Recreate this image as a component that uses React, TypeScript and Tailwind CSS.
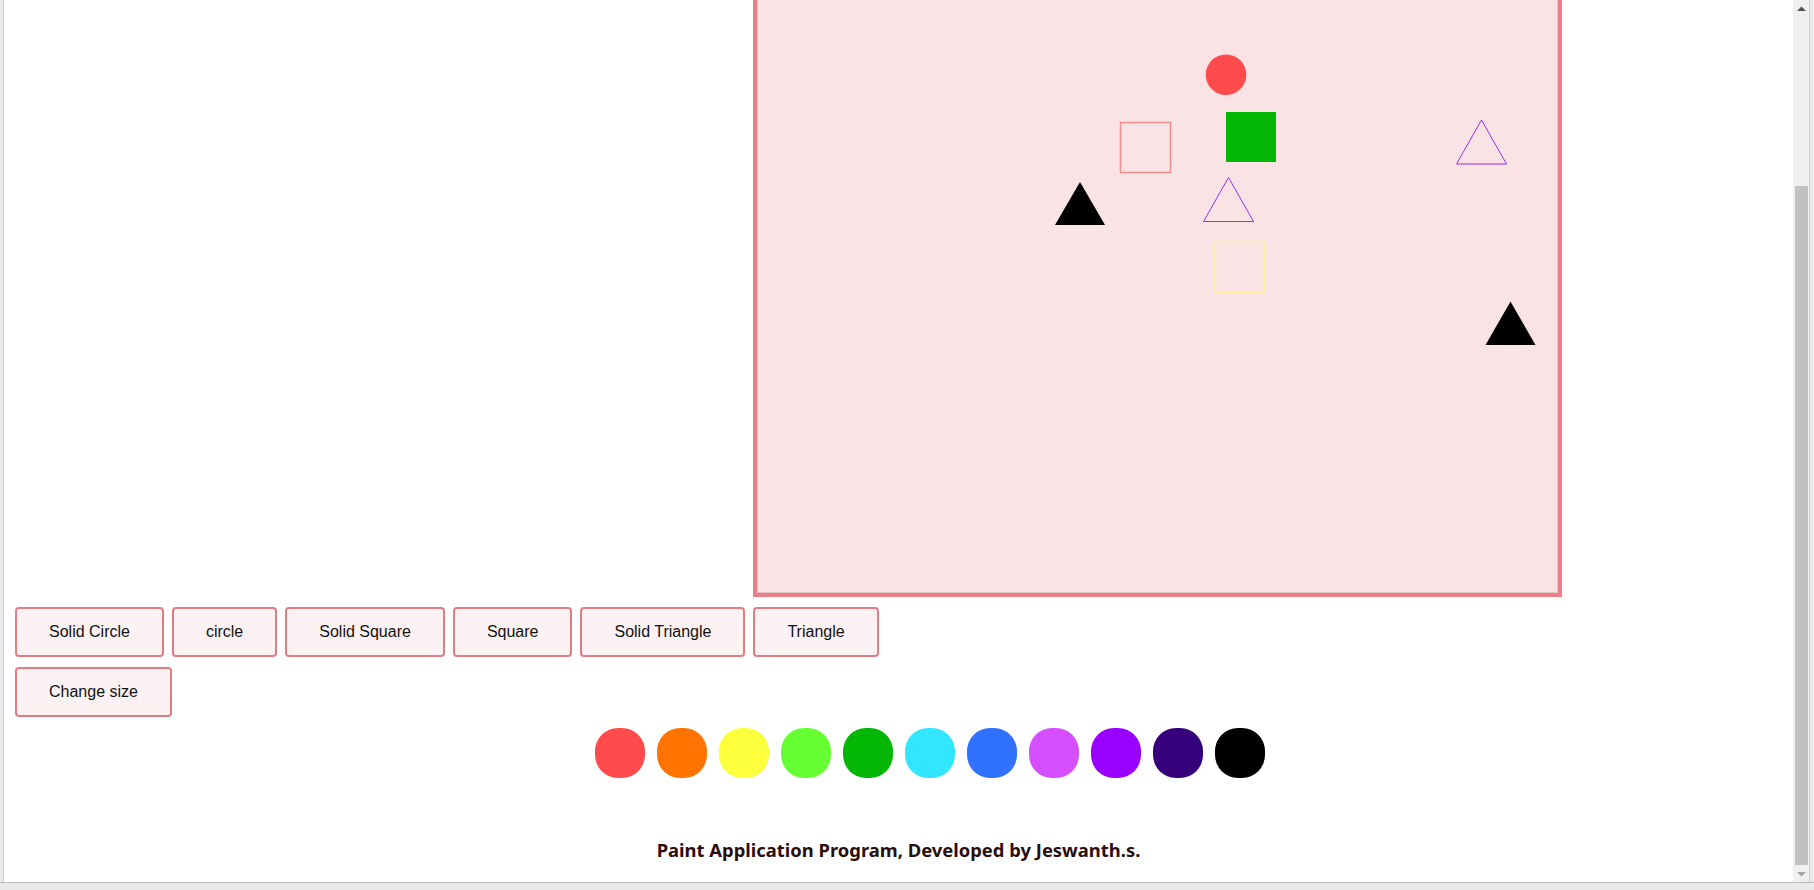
import React from "react";

const buttonsRow1 = ["Solid Circle", "circle", "Solid Square", "Square", "Solid Triangle", "Triangle"];
const colors = ["#ff4b4b", "#ff7300", "#fcff3c", "#66ff33", "#05b705", "#33e6ff", "#3171ff", "#d64fff", "#9900ff", "#35007a", "#000000"];

function Btn({ label }: { label: string }) {
  return (
    <button className="border-2 border-[#e47c84] bg-[#fdf2f3] rounded-[4px] px-8 py-[14px] leading-[18px] text-[16px] text-[#111] font-['Liberation_Sans',Arial,sans-serif]">
      {label}
    </button>
  );
}

function Canvas() {
  return (
    <div className="relative ml-[749px] w-[809px] h-[597px] border-[4px] border-t-0 border-[#e8808a] bg-[#f9e3e5] shadow-[inset_0_-1px_0_#e7c3c7,inset_1px_0_0_#e7c3c7,inset_-1px_0_0_#e7c3c7]">
      <svg className="absolute left-[-4px] top-0" width="809" height="597" viewBox="0 0 809 597">
        <circle cx="473" cy="74.7" r="20.3" fill="#ff4b4b" />
        <rect x="473" y="112" width="50" height="50" fill="#05b705" />
        <rect x="367.5" y="122.5" width="50" height="50" fill="none" stroke="#f48c8c" strokeWidth="1.5" />
        <rect x="461.5" y="241.5" width="50" height="51" fill="none" stroke="#fff0a6" strokeWidth="1.5" />
        <polygon points="728.5,120 703.5,164 753.5,164" fill="none" stroke="#9a2cf5" strokeWidth="1" />
        <polygon points="475.5,177.5 450.5,221.5 500.5,221.5" fill="none" stroke="#9a2cf5" strokeWidth="1" />
        <polygon points="327,182 302,225 352,225" fill="#000" />
        <polygon points="757.5,301.5 732.5,345 782.5,345" fill="#000" />
      </svg>
    </div>
  );
}

function Scrollbar() {
  return (
    <div className="w-[16px] h-full bg-[#f0f0f0] flex flex-col items-center">
      <div className="h-[17px] w-full flex items-center justify-center">
        <svg width="9" height="6" viewBox="0 0 9 6"><polygon points="4.5,0.5 0,5 9,5" fill="#505050" /></svg>
      </div>
      <div className="h-[169px]" />
      <div className="w-[13px] ml-[1px] h-[679px] bg-[#c1c1c1]" />
      <div className="flex-1 w-full flex items-center justify-center">
        <svg width="9" height="6" viewBox="0 0 9 6"><polygon points="0,1 9,1 4.5,5.5" fill="#a3a3a3" /></svg>
      </div>
    </div>
  );
}

export default function App() {
  return (
    <div className="w-[1814px] h-[890px] bg-[#e8e9eb] overflow-hidden flex flex-col">
      <div className="flex h-[882px]">
        <div className="w-[3px] bg-[#e9e9ea]" />
        <div className="w-[1px] bg-[#cfcfcf]" />
        <div className="w-[1789px] bg-white flex flex-col">
          <Canvas />
          <div className="ml-[11px] mt-[10px] flex gap-x-[8px]">
            {buttonsRow1.map((b) => (
              <Btn key={b} label={b} />
            ))}
          </div>
          <div className="ml-[11px] mt-[10px] flex">
            <Btn label="Change size" />
          </div>
          <div className="ml-[591px] mt-[11px] flex gap-x-[12px]">
            {colors.map((c) => (
              <div key={c} className="w-[50px] h-[50px] rounded-[23px]" style={{ backgroundColor: c }} />
            ))}
          </div>
          <div className="mt-[60px] text-center font-['Noto_Sans',sans-serif] font-bold text-[18.4px] leading-[24px] text-[#2b0d0d]">
            Paint Application Program, Developed by Jeswanth.s.
          </div>
        </div>
        <Scrollbar />
        <div className="w-[1px] bg-[#d4d4d4]" />
        <div className="w-[4px] bg-[#e8e9eb]" />
      </div>
      <div className="h-[1px] bg-[#b8b8b8]" />
      <div className="flex-1 bg-[#e8e9eb]" />
    </div>
  );
}
